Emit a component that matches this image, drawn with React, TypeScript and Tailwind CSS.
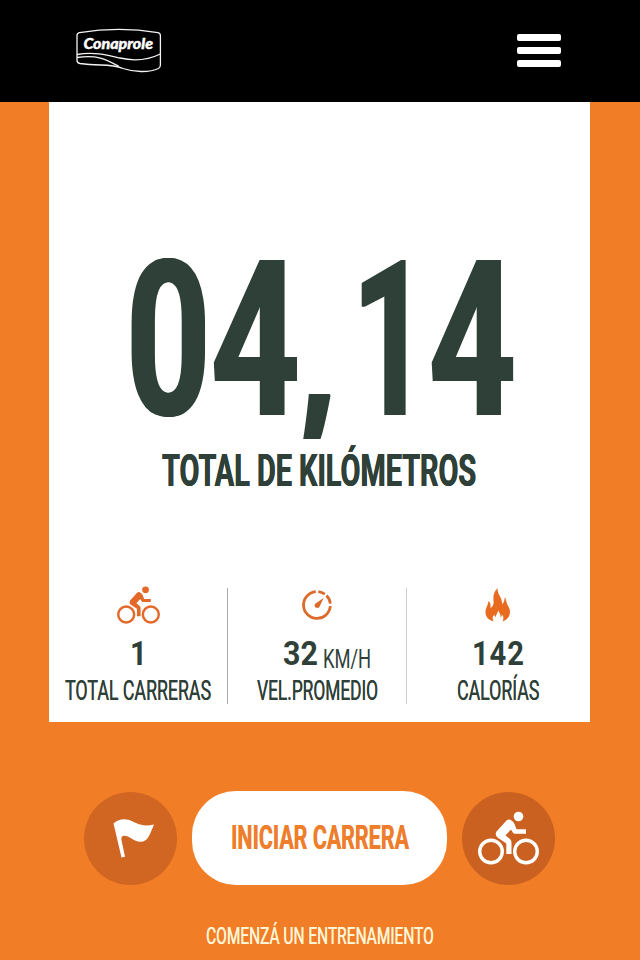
import React, { useLayoutEffect, useRef, useState } from 'react'

type CondensedProps = {
  width: number
  className?: string
  children: string
}

// Squeezes one line of text to a given width
function Condensed({ width, className = '', children }: CondensedProps) {
  const ref = useRef<HTMLSpanElement>(null)
  const [scale, setScale] = useState(1)

  useLayoutEffect(() => {
    if (ref.current) setScale(width / ref.current.offsetWidth)
  }, [width, children])

  return (
    <span className={`block shrink-0 whitespace-nowrap ${className}`} style={{ width }}>
      <span ref={ref} className="inline-block origin-left align-top" style={{ transform: `scaleX(${scale})` }}>
        {children}
      </span>
    </span>
  )
}

function Logo() {
  return (
    <svg width="88" height="46" viewBox="0 0 88 46" fill="none" stroke="#f4f4f4" strokeWidth="1.3">
      <path d="M2 7.5Q2 5.2 4.4 4.7Q44 -2 83 4.7Q85.4 5.2 85.4 7.5V37Q85.4 39.5 83.5 40.5C74 45 58 44 48 40.5C34 35 26 38.5 5 35.5Q2 35 2 32.5Z" />
      <path d="M2 26.5C20 23.5 34 27.5 45 30C60 33.5 73 32 85.4 26" />
      <path d="M2 29.5C24 26.5 32 32 44 38.5" />
      <text x="8.5" y="20.8" fontSize="14.6" fontWeight="900" fontStyle="italic" fontFamily="Lato, 'Open Sans', sans-serif" textLength="69.5" lengthAdjust="spacingAndGlyphs" fill="#fff" stroke="#fff" strokeWidth="0.4">
        Conaprole
      </text>
    </svg>
  )
}

function BikeIcon({ className = '', wheel = 3 }: { className?: string; wheel?: number }) {
  return (
    <svg viewBox="0 0 61 54" className={`shrink-0 ${className}`} fill="none" stroke="currentColor">
      <circle cx="13" cy="40.5" r="11.3" strokeWidth={wheel} />
      <circle cx="48" cy="40.5" r="11.3" strokeWidth={wheel} />
      <circle cx="40.5" cy="5.5" r="4.8" fill="currentColor" stroke="none" />
      <path
        d="M28.500 9.500Q31 7.500 33.500 9.500Q36 11 36.500 13L38.500 18.300H48V22.800H37Q35.500 22.800 34.800 21.500L33 18.500L27.500 24.500L32 28Q33.500 29.500 33.500 31.500V43H28.300V32.500L19.500 26.500Q16.500 23.500 18.500 20.500Z"
        fill="currentColor"
        stroke="none"
      />
    </svg>
  )
}

function GaugeIcon() {
  return (
    <svg width="32" height="32" viewBox="0 0 32 32" fill="none" stroke="#dd6a2a" strokeWidth="2.8">
      <path d="M29.300 17A13.400 13.400 0 1 1 14.800 2.650" />
      <path d="M17.300 2.650A13.400 13.400 0 0 1 23.800 5.200" />
      <path d="M25.500 6.600A13.400 13.400 0 0 1 29.300 14.600" />
      <path d="M22.600 9L18.400 18Q16.500 20 14.300 18.300Q12.700 16 14.500 14.600Z" fill="#dd6a2a" stroke="none" />
    </svg>
  )
}

function FlameIcon() {
  return (
    <svg width="26" height="34" viewBox="0 0 26 34" fill="#e96b20">
      <path d="M12.700 0C11.500 6 17.500 9 17 16C19 15.500 19.500 12 19.800 9C22 13 21 15 23.500 18.500C27 25 24 31 17.500 33.500C19 30 18.500 28 16.700 26.500C17 28 16.500 29 15.500 29.500C16 26 14 25.500 13.500 22.500C12 25 11.500 27 10.500 29C9.500 28.500 9.500 27.500 9.500 26.500C7 29 7.500 31 8.700 33.500C3 32 .5 28.500 .5 24C.5 20 3 17.500 3.500 13C5.500 14.500 5.800 17 5.500 20C8 18.500 9 16 8.500 13C8 8 9 3 12.700 0Z" />
    </svg>
  )
}

function FlagIcon() {
  return (
    <svg width="42" height="40" viewBox="0 0 42 40" fill="#fff">
      <path d="M.5 5.500C5 1.500 10 .5 15.500 1.800C23 4.500 28 9.500 41 6.500C37 16 35 22.500 30 23.500C21 25.500 17.500 17 10.500 17.800C8 18.500 8.300 21 8.700 23L12 38.800L8.500 39.500Z" />
    </svg>
  )
}

export default function App() {
  return (
    <div className="flex h-[960px] w-[640px] flex-col overflow-hidden bg-[#f17e27] font-['Roboto',sans-serif] text-[#2e4037]">
      <header className="flex h-[102px] shrink-0 items-center justify-between bg-black pr-[79px] pl-[75px]">
        <Logo />
        <button className="mb-px flex flex-col gap-[6px]" aria-label="Menú">
          <span className="h-[7px] w-[44px] rounded-[2px] bg-white" />
          <span className="h-[7px] w-[44px] rounded-[2px] bg-white" />
          <span className="h-[7px] w-[44px] rounded-[2px] bg-white" />
        </button>
      </header>

      <main className="ml-[49px] flex h-[619.5px] w-[541px] shrink-0 flex-col bg-white pt-[136px]">
        <div className="flex h-[200px] pl-[77px] text-[217px] leading-[206px] font-bold [text-shadow:2px_0_currentColor,-2px_0_currentColor]">
          <Condensed width={85}>0</Condensed>
          <Condensed width={89}>4</Condensed>
          <Condensed width={36} className="font-['Open_Sans',sans-serif] text-[158px] leading-[236px] font-extrabold [text-shadow:2px_0_currentColor]">,</Condensed>
          <Condensed width={16}>&nbsp;</Condensed>
          <Condensed width={77}>1</Condensed>
          <Condensed width={87}>4</Condensed>
        </div>
        <h1 className="flex h-[66px] justify-center pr-px text-[45px] leading-[66px] font-bold [text-shadow:0.4px_0_currentColor,-0.4px_0_currentColor]">
          <Condensed width={314}>TOTAL DE KILÓMETROS</Condensed>
        </h1>

        <div className="mt-[82px] flex h-[125px] text-[27px]">
          <div className="flex w-[178px] flex-col items-center">
            <BikeIcon className="h-[38px] w-[43px] text-[#e3692a]" wheel={3.5} />
            <Condensed width={17} className="mt-[12px] text-[33px] leading-[36px] font-bold">1</Condensed>
            <Condensed width={146} className="leading-[38px] [text-shadow:0.3px_0_currentColor]">TOTAL CARRERAS</Condensed>
          </div>
          <div className="mt-[2px] h-[116px] w-px bg-[#aaa]" />
          <div className="flex w-[178px] flex-col items-center">
            <div className="flex h-[38px] shrink-0 items-center"><GaugeIcon /></div>
            <div className="mt-[12px] flex h-[36px] shrink-0 gap-[5px] pl-[19px]">
              <Condensed width={35} className="text-[33px] leading-[36px] font-bold">32</Condensed>
              <Condensed width={48} className="text-[26px] leading-[46px]">KM/H</Condensed>
            </div>
            <Condensed width={121} className="leading-[38px] [text-shadow:0.3px_0_currentColor]">VEL.PROMEDIO</Condensed>
          </div>
          <div className="mt-[2px] h-[116px] w-px bg-[#ccc]" />
          <div className="flex w-[182px] flex-col items-center">
            <div className="flex h-[38px] shrink-0 items-center"><FlameIcon /></div>
            <Condensed width={53} className="mt-[12px] text-[33px] leading-[36px] font-bold tracking-[1px]">142</Condensed>
            <Condensed width={82} className="leading-[38px] [text-shadow:0.3px_0_currentColor]">CALORÍAS</Condensed>
          </div>
        </div>
      </main>

      <div className="mt-[69.5px] flex h-[94px] shrink-0 items-center gap-[15px] pl-[84px]">
        <button className="flex size-[93px] items-center justify-center rounded-full bg-[#d16522] pl-[7px]" aria-label="Meta">
          <FlagIcon />
        </button>
        <button className="flex h-[94px] w-[255px] items-center justify-center rounded-[44px] bg-white text-[33.5px] font-bold text-[#ef7e2c] [text-shadow:0.4px_0_currentColor]">
          <Condensed width={178}>INICIAR CARRERA</Condensed>
        </button>
        <button className="flex size-[93px] items-center justify-center rounded-full bg-[#ca6120] text-white" aria-label="Bicicleta">
          <BikeIcon className="h-[54px] w-[61px]" wheel={3.4} />
        </button>
      </div>

      <p className="mt-[31px] flex h-[40px] justify-center pr-px text-[24.5px] leading-[40px] text-[#fff5d9] [text-shadow:0.3px_0_currentColor]">
        <Condensed width={228}>COMENZÁ UN ENTRENAMIENTO</Condensed>
      </p>
    </div>
  )
}
